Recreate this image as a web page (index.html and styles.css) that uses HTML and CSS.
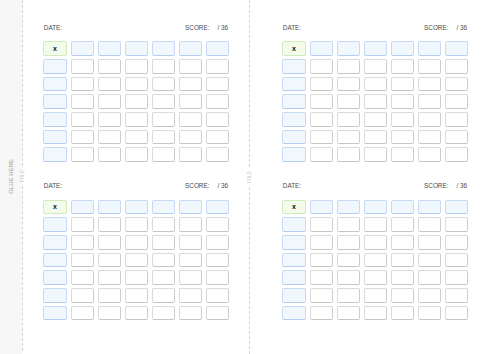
FILE: index.html
```html
<!DOCTYPE html>
<html>
<head>
<meta charset="utf-8">
<link rel="stylesheet" href="styles.css">
</head>
<body>
<div class="page">
  <div class="glue"><span class="glue-text">GLUE HERE</span></div>
  <div class="fold"><div class="seg"></div><span class="fold-text">FOLD</span><div class="seg"></div></div>
  <div class="half half-left">
    <div class="quad" id="q1"></div>
    <div class="quad" id="q3"></div>
  </div>
  <div class="fold fold-mid"><div class="seg"></div><span class="fold-text">FOLD</span><div class="seg"></div></div>
  <div class="half half-right">
    <div class="quad" id="q2"></div>
    <div class="quad" id="q4"></div>
  </div>
</div>
<template id="panel">
  <div class="panel">
    <div class="head"><span>DATE:</span><span class="score"><span>SCORE:</span><span>/ 36</span></span></div>
    <div class="grid"></div>
  </div>
</template>
<script>
  const tpl = document.getElementById('panel');
  document.querySelectorAll('.quad').forEach(q => {
    const node = tpl.content.cloneNode(true);
    const grid = node.querySelector('.grid');
    for (let r = 0; r < 7; r++) {
      for (let c = 0; c < 7; c++) {
        const d = document.createElement('div');
        if (r === 0 && c === 0) { d.className = 'cell corner'; d.textContent = 'x'; }
        else if (r === 0 || c === 0) d.className = 'cell label';
        else d.className = 'cell';
        grid.appendChild(d);
      }
    }
    q.appendChild(node);
  });
</script>
</body>
</html>
```
FILE: styles.css
```css
html, body {
  margin: 0;
  padding: 0;
  background: #ffffff;
}
body {
  font-family: "Liberation Sans", Arial, sans-serif;
}
.page {
  display: flex;
  width: 500px;
  height: 354px;
}
.glue {
  width: 22px;
  flex: none;
  background: #f7f7f7;
  display: flex;
  align-items: center;
  justify-content: center;
}
.glue-text {
  writing-mode: vertical-rl;
  transform: rotate(180deg);
  font-size: 6px;
  color: #999;
  white-space: nowrap;
  margin-top: -2px;
}
.fold {
  width: 1px;
  flex: none;
  display: flex;
  flex-direction: column;
  align-items: center;
  height: 351px;
}
.fold-mid {
  height: 354px;
}
.seg {
  flex: 1;
  width: 0;
  border-left: 1px dashed #d4d4d4;
}
.fold-text {
  writing-mode: vertical-rl;
  transform: rotate(180deg);
  font-size: 4.5px;
  color: #c8c8c8;
  padding: 4px 0;
  line-height: 5px;
}
.half {
  display: flex;
  flex-direction: column;
}
.half-left {
  width: 226px;
  flex: none;
}
.half-right {
  flex: 1;
}
.quad {
  height: 158.3px;
  display: flex;
  justify-content: center;
  padding-top: 24px;
  box-sizing: border-box;
}
.panel {
  width: 186.4px;
}
.head {
  display: flex;
  justify-content: space-between;
  font-size: 6.4px;
  line-height: 8px;
  color: #4a4a4a;
  padding: 0 1px;
  margin-bottom: 9.3px;
}
.score {
  display: flex;
  gap: 8px;
}
.grid {
  display: grid;
  grid-template-columns: 24.4px repeat(6, 1fr);
  grid-auto-rows: 14.7px;
  column-gap: 4.2px;
  row-gap: 3px;
}
.cell {
  box-sizing: border-box;
  border: 1px solid #dadada;
  border-right-color: #cdcdcd;
  border-bottom-color: #c6c6c6;
  border-radius: 2px;
  background: #fff;
}
.cell.label {
  background: #f0f7fd;
  border-color: #c6daf6;
  border-bottom-color: #b5cdf2;
}
.cell.corner {
  background: #f3fbea;
  border-color: #d0ecba;
  display: flex;
  align-items: center;
  justify-content: center;
  font-size: 7px;
  font-weight: bold;
  color: #111;
  line-height: 1;
}
```
